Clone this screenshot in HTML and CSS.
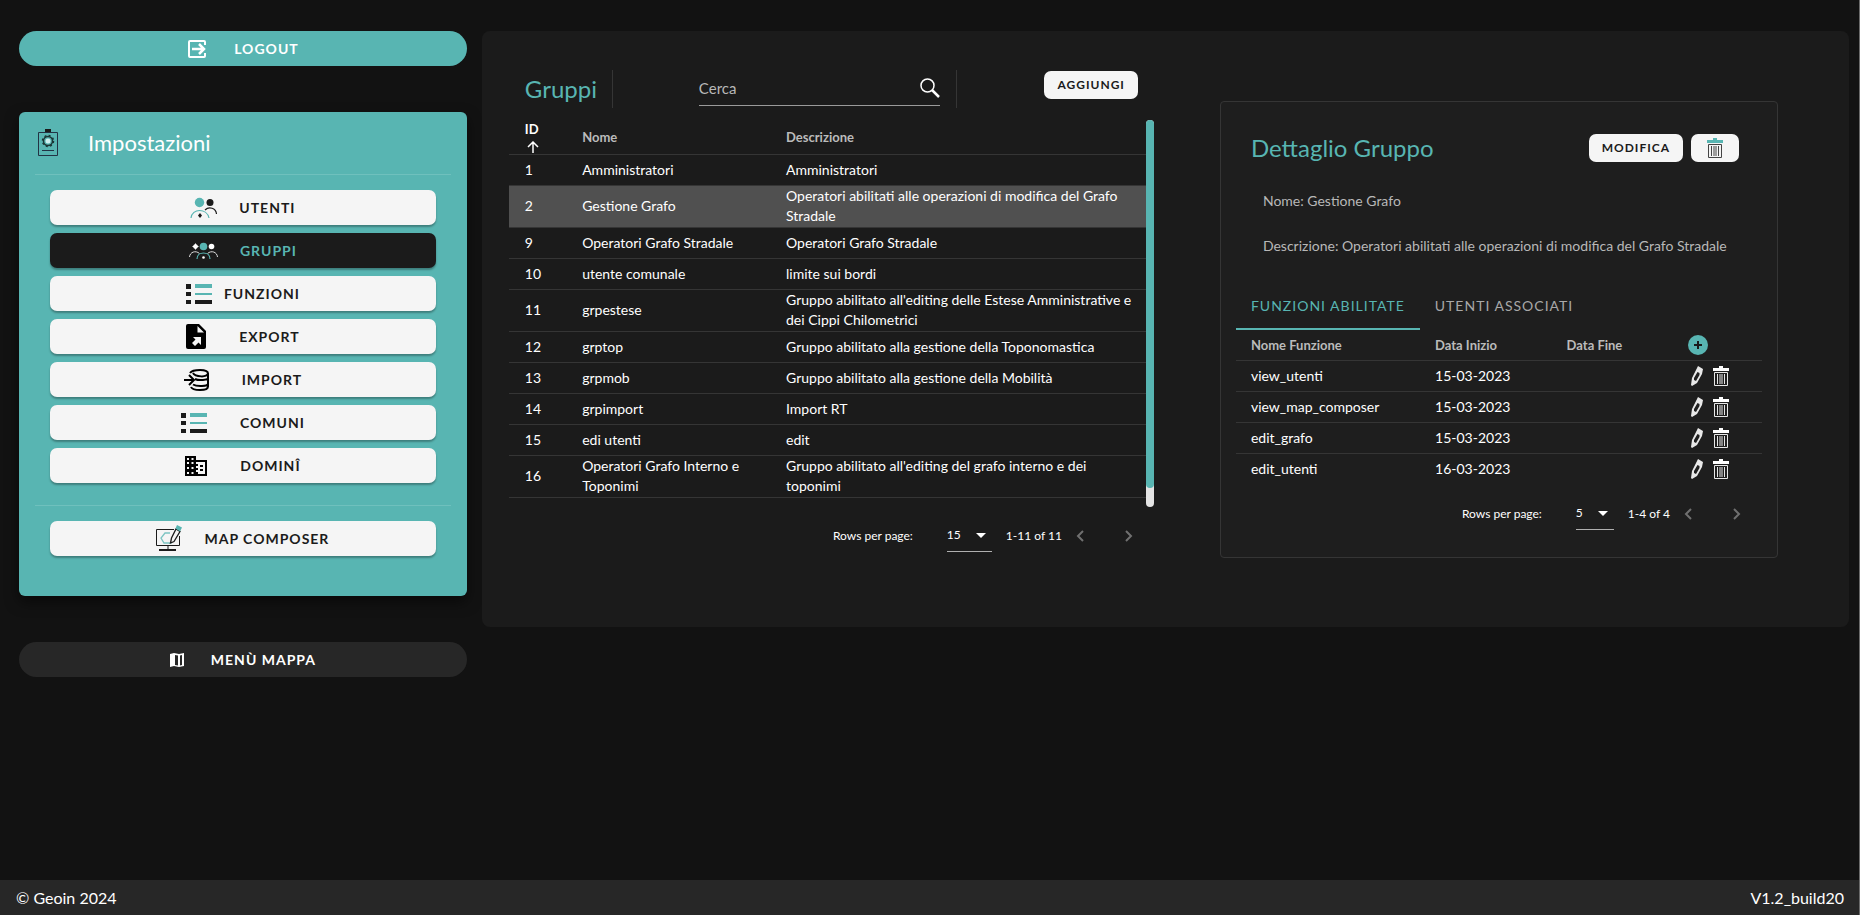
FILE: index.html
```html
<!DOCTYPE html>
<html lang="it">
<head>
    <meta charset="UTF-8">
    <meta name="viewport" content="width=device-width, initial-scale=1.0">
    <title>Impostazioni - Gruppi</title>
    <link rel="stylesheet" href="styles.css">
</head>
<body>
    <!-- Shared icons -->
    <svg class="sprite" aria-hidden="true">
        <symbol id="list" viewBox="0 0 26 22">
            <path fill="#1b1b1b" d="M0 1h5v5H0zM0 9h5v4H0zM0 17h5v4H0zM9 17h17v4H9z"/>
            <path fill="#58b5b2" d="M9 1h17v4H9zM9 10h17v2H9z"/>
        </symbol>
        <symbol id="trash" viewBox="0 0 16 20">
            <path class="lid" d="M6 0h4v2h6v3H0V2h6z"/>
            <path fill="none" stroke="currentColor" d="M1.5 6.500h13v13h-13z"/>
            <path fill="none" stroke="currentColor" d="M4.500 8v10M7 8v10M9 8v10M11.500 8v10"/>
        </symbol>
        <symbol id="pencil" viewBox="0 0 14 20">
            <path fill="currentColor" fill-rule="evenodd" d="M8 0l5 3-1 5-5 9-5 3-1-1 1-7zM7.500 6l-3.500 6v2l2 1 3.500-6V7z"/>
        </symbol>
        <symbol id="prev" viewBox="0 0 8 12">
            <path fill="none" stroke="currentColor" stroke-width="2" d="M7 1L2 6l5 5"/>
        </symbol>
        <symbol id="next" viewBox="0 0 8 12">
            <path fill="none" stroke="currentColor" stroke-width="2" d="M1 1l5 5-5 5"/>
        </symbol>
    </svg>

    <div class="layout">
        <aside class="sidebar">
            <button class="pill pill-logout">
                <svg width="20" height="20" viewBox="0 0 20 20"><path fill="none" stroke="currentColor" stroke-width="2" d="M18 6V3a1 1 0 0 0-1-1H3a1 1 0 0 0-1 1v14a1 1 0 0 0 1 1h14a1 1 0 0 0 1-1v-3"/><path fill="none" stroke="currentColor" stroke-width="2.500" d="M5 10h12M12 5l5 5-5 5"/></svg>
                Logout
            </button>

            <nav class="menu">
                <h2 class="menu-title">
                    <svg width="22" height="28" viewBox="0 0 22 28">
                        <path fill="#1b1b1b" d="M8 0h6v3H8z"/>
                        <path fill="none" stroke="#234" d="M1.500 3.500h19v23h-19zM5 21.500h12"/>
                        <circle cx="11" cy="12" r="4.500" fill="none" stroke="#1b3535" stroke-width="1.500"/>
                        <circle cx="11" cy="12" r="5.500" fill="none" stroke="#1b3535" stroke-width="1.500" stroke-dasharray="2 2.320"/>
                        <circle cx="11" cy="12" r="2.500" fill="#cfeeee"/>
                    </svg>
                    Impostazioni
                </h2>
                <div class="menu-list">
                    <button class="item gap-m">
                        <svg width="27" height="22" viewBox="0 0 27 22">
                            <circle cx="9.500" cy="5.500" r="4.700" fill="#58b5b2"/>
                            <circle cx="20" cy="5.500" r="3.500" fill="#1b1b1b"/>
                            <path fill="none" stroke="#58b5b2" stroke-width="1.200" d="M1 21c1-10 16-10 18 0"/>
                            <path fill="none" stroke="#1b1b1b" stroke-width="1.200" d="M15 13c4-4 11-2 11.500 4"/>
                            <path fill="#1b1b1b" d="M10 16l2 2.500-2 2.500-2-2.500z"/>
                        </svg>
                        Utenti
                    </button>
                    <button class="item item-active gap-m">
                        <svg width="29" height="18" viewBox="0 0 29 18">
                            <path fill="#fff" d="M6.500 1l1.200 2.300L10 4.500 7.700 5.700 6.500 8 5.300 5.700 3 4.500l2.300-1.200z"/>
                            <circle cx="6.500" cy="4.500" r="2.200" fill="#fff"/>
                            <circle cx="14.500" cy="4.500" r="3.800" fill="#58b5b2"/>
                            <circle cx="22.500" cy="4.500" r="2.800" fill="#fff"/>
                            <path fill="none" stroke="#ddd" d="M.5 15c.5-5 6-7 10-3.500M18.500 11.500c4-3.500 9.500-1.500 10 3.500"/>
                            <path fill="none" stroke="#58b5b2" stroke-width="1.200" d="M8 17c0-8 13-8 13 0"/>
                            <circle cx="14.500" cy="15.500" r="1.300" fill="#fff"/>
                        </svg>
                        Gruppi
                    </button>
                    <button class="item gap-s"><svg width="26" height="22"><use href="#list"/></svg>Funzioni</button>
                    <button class="item gap-l">
                        <svg width="20" height="25" viewBox="0 0 20 25">
                            <path d="M2 0h11l7 7v16a2 2 0 0 1-2 2H2a2 2 0 0 1-2-2V2a2 2 0 0 1 2-2z"/>
                            <path fill="#f5f5f5" d="M11.500 2v6.500H18zM7 13h8v8l-2.500-2.500L9 22l-3-3 3.500-3.500z"/>
                        </svg>
                        Export
                    </button>
                    <button class="item gap-l">
                        <svg width="25" height="22" viewBox="0 0 25 22">
                            <g fill="none" stroke="#000" stroke-width="2">
                                <path d="M6 4C8 1 13 1 16 1c5 0 8 1.500 8 3.500v13c0 2-3 3.500-8 3.500-4 0-8-.5-9-3M9 4c2 4 15 5 15 0M11 10c4 2 13 1 13-1M9 15.500c4 2.500 15 2 15-1"/>
                                <path d="M0 11h9M5 6l5 5-5 5"/>
                            </g>
                        </svg>
                        Import
                    </button>
                    <button class="item gap-l"><svg width="26" height="22"><use href="#list"/></svg>Comuni</button>
                    <button class="item gap-l">
                        <svg width="22" height="20" viewBox="0 0 22 20">
                            <path fill-rule="evenodd" d="M0 0h11v4h11v16H0zM2 2v2h2V2zM6.500 2v2h2V2zM2 6v2h2V6zM6.500 6v2h2V6zM2 11v2h2v-2zM6.500 11v2h2v-2zM2 16v2h2v-2zM6.500 16v2h2v-2zM11 6v2h2v2h-2v2h2v2h-2v2h2v2h7V6z"/>
                            <path d="M15 9h3v2h-3zM15 13h3v2h-3z"/>
                        </svg>
                        Dominî
                    </button>
                </div>
                <div class="menu-list">
                    <button class="item gap-m">
                        <svg width="26" height="27" viewBox="0 0 26 27">
                            <path fill="none" stroke="#1b1b1b" d="M18 4.500H.5v16h23V11M12 21v4"/>
                            <path fill="#1b1b1b" d="M3 24h17v2H3z"/>
                            <path fill="none" stroke="#7cc4c2" stroke-width="1.300" d="M14 8H9l-4 5 3 5h7l2-4"/>
                            <path fill="#f5f5f5" stroke="#1b1b1b" stroke-width="1.300" d="M20 4l4 2.500-6 10L14.500 18l1-5z"/>
                            <path fill="#58b5b2" d="M21 0l5 2.500-2 4-4.500-3z"/>
                        </svg>
                        Map Composer
                    </button>
                </div>
            </nav>

            <button class="pill pill-map">
                <svg width="14" height="14" viewBox="0 0 14 14"><path fill="currentColor" fill-rule="evenodd" d="M0 1l4-1 5 1 5-1v13l-5 1-5-1-4 1zM5 2v10l3 .6V2.600zM10 2.500v10l2-.5V2z"/></svg>
                Menù Mappa
            </button>
        </aside>

        <main class="panel">
            <section class="groups">
                <header class="groups-header">
                    <h1 class="title">Gruppi</h1>
                    <div class="search">
                        <label class="search-field">
                            <input type="text" placeholder="Cerca" aria-label="Cerca">
                            <svg width="20" height="20" viewBox="0 0 20 20"><circle cx="7.500" cy="7.500" r="6.500" fill="none" stroke="#fff" stroke-width="1.500"/><path stroke="#fff" stroke-width="2.500" d="M12 12l7 7"/></svg>
                        </label>
                    </div>
                    <button class="btn">Aggiungi</button>
                </header>

                <div class="table-frame">
                    <table class="groups-table">
                        <thead>
                            <tr>
                                <th class="col-id sorted">ID
                                    <svg width="12" height="12" viewBox="0 0 12 12"><path fill="none" stroke="currentColor" stroke-width="1.500" d="M6 12V1M1 6l5-5 5 5"/></svg>
                                </th>
                                <th class="col-name">Nome</th>
                                <th>Descrizione</th>
                            </tr>
                        </thead>
                        <tbody>
                            <tr><td>1</td><td>Amministratori</td><td>Amministratori</td></tr>
                            <tr class="selected"><td>2</td><td>Gestione Grafo</td><td>Operatori abilitati alle operazioni di modifica del Grafo Stradale</td></tr>
                            <tr><td>9</td><td>Operatori Grafo Stradale</td><td>Operatori Grafo Stradale</td></tr>
                            <tr><td>10</td><td>utente comunale</td><td>limite sui bordi</td></tr>
                            <tr><td>11</td><td>grpestese</td><td>Gruppo abilitato all'editing delle Estese Amministrative e dei Cippi Chilometrici</td></tr>
                            <tr><td>12</td><td>grptop</td><td>Gruppo abilitato alla gestione della Toponomastica</td></tr>
                            <tr><td>13</td><td>grpmob</td><td>Gruppo abilitato alla gestione della Mobilità</td></tr>
                            <tr><td>14</td><td>grpimport</td><td>Import RT</td></tr>
                            <tr><td>15</td><td>edi utenti</td><td>edit</td></tr>
                            <tr><td>16</td><td>Operatori Grafo Interno e Toponimi</td><td>Gruppo abilitato all'editing del grafo interno e dei toponimi</td></tr>
                        </tbody>
                    </table>
                    <div class="scrollbar"><div class="scrollbar-thumb"></div></div>
                </div>

                <div class="pagination">
                    <label for="groupRows">Rows per page:</label>
                    <span class="rows"><select id="groupRows"><option>15</option></select></span>
                    <span>1-11 of 11</span>
                    <button class="page-btn" aria-label="Pagina precedente"><svg width="8" height="12"><use href="#prev"/></svg></button>
                    <button class="page-btn" aria-label="Pagina successiva"><svg width="8" height="12"><use href="#next"/></svg></button>
                </div>
            </section>

            <section class="detail">
                <header class="detail-header">
                    <h2 class="title">Dettaglio Gruppo</h2>
                    <button class="btn">Modifica</button>
                    <button class="btn btn-trash" aria-label="Elimina"><svg width="16" height="20"><use href="#trash"/></svg></button>
                </header>
                <p class="detail-text">Nome: Gestione Grafo</p>
                <p class="detail-text">Descrizione: Operatori abilitati alle operazioni di modifica del Grafo Stradale</p>

                <div class="tabs">
                    <button class="tab tab-active">Funzioni Abilitate</button>
                    <button class="tab">Utenti Associati</button>
                </div>

                <table class="functions-table">
                    <thead>
                        <tr>
                            <th class="col-function">Nome Funzione</th>
                            <th class="col-start">Data Inizio</th>
                            <th class="col-end">Data Fine</th>
                            <th><button class="icon-btn" aria-label="Aggiungi funzione"><svg width="20" height="20" viewBox="0 0 20 20"><circle cx="10" cy="10" r="10" fill="#58b5b2"/><path stroke="#1b1b1b" stroke-width="2" d="M10 6v8M6 10h8"/></svg></button></th>
                        </tr>
                    </thead>
                    <tbody>
                        <tr><td>view_utenti</td><td>15-03-2023</td><td></td><td><div class="actions"><button class="icon-btn" aria-label="Modifica"><svg width="14" height="20"><use href="#pencil"/></svg></button><button class="icon-btn" aria-label="Elimina"><svg width="16" height="20"><use href="#trash"/></svg></button></div></td></tr>
                        <tr><td>view_map_composer</td><td>15-03-2023</td><td></td><td><div class="actions"><button class="icon-btn" aria-label="Modifica"><svg width="14" height="20"><use href="#pencil"/></svg></button><button class="icon-btn" aria-label="Elimina"><svg width="16" height="20"><use href="#trash"/></svg></button></div></td></tr>
                        <tr><td>edit_grafo</td><td>15-03-2023</td><td></td><td><div class="actions"><button class="icon-btn" aria-label="Modifica"><svg width="14" height="20"><use href="#pencil"/></svg></button><button class="icon-btn" aria-label="Elimina"><svg width="16" height="20"><use href="#trash"/></svg></button></div></td></tr>
                        <tr><td>edit_utenti</td><td>16-03-2023</td><td></td><td><div class="actions"><button class="icon-btn" aria-label="Modifica"><svg width="14" height="20"><use href="#pencil"/></svg></button><button class="icon-btn" aria-label="Elimina"><svg width="16" height="20"><use href="#trash"/></svg></button></div></td></tr>
                    </tbody>
                </table>

                <div class="pagination">
                    <label for="functionRows">Rows per page:</label>
                    <span class="rows"><select id="functionRows"><option>5</option></select></span>
                    <span>1-4 of 4</span>
                    <button class="page-btn" aria-label="Pagina precedente"><svg width="8" height="12"><use href="#prev"/></svg></button>
                    <button class="page-btn" aria-label="Pagina successiva"><svg width="8" height="12"><use href="#next"/></svg></button>
                </div>
            </section>
        </main>
    </div>

    <footer class="footer">
        <span>© Geoin 2024</span>
        <span>V1.2_build20</span>
    </footer>
</body>
</html>
```
FILE: styles.css
```css
:root {
    --teal: #58b5b2;
    --background: #121212;
    --panel: #1b1b1b;
    --card: #1e1e1e;
    --light: #f5f5f5;
    --line: #353535;
}

* {
    margin: 0;
    padding: 0;
    box-sizing: border-box;
}

body {
    font-family: Lato, "Open Sans", sans-serif;
    font-size: 14px;
    line-height: 20px;
    color: white;
    background: var(--background);
    border-right: 1px solid #6a6a6a;
    min-height: 100vh;
    display: flex;
    flex-direction: column;
}

button, input, select {
    font: inherit;
    color: inherit;
    background: none;
    border: none;
}

button {
    cursor: pointer;
}

svg {
    display: block;
    flex-shrink: 0;
}

.sprite {
    position: absolute;
    width: 0;
    height: 0;
}

.layout {
    flex: 1;
    display: grid;
    grid-template-columns: 19fr 58fr;
    gap: 15px;
    align-items: start;
    padding: 31px 10px 31px 19px;
}

/* Sidebar */
.sidebar {
    display: flex;
    flex-direction: column;
    gap: 46px;
}

.pill, .item {
    display: flex;
    align-items: center;
    justify-content: center;
    width: 100%;
    height: 35px;
    font-size: 14px;
    font-weight: 700;
    letter-spacing: 1px;
    text-transform: uppercase;
}

.pill {
    gap: 27px;
    border-radius: 18px;
}

.pill-logout {
    background: var(--teal);
}

.pill-map {
    background: #272727;
}

.menu {
    padding: 0 16px 39px;
    background: var(--teal);
    border-radius: 6px;
    box-shadow: 0 6px 14px rgba(0, 0, 0, 0.5);
}

.menu-title {
    display: flex;
    align-items: center;
    gap: 29px;
    height: 62px;
    padding-left: 2px;
    font-size: 22px;
    font-weight: 400;
}

.menu-list {
    display: flex;
    flex-direction: column;
    gap: 8px;
    padding: 15px 15px 22px;
    border-top: 1px solid #6fc0bd;
}

.menu-list:last-child {
    padding-bottom: 1px;
}

.item {
    color: #1b1b1b;
    background: var(--light);
    border-radius: 7px;
    box-shadow: 0 2px 2px rgba(0, 0, 0, 0.3);
}

.item-active {
    color: var(--teal);
    background: #1b1b1b;
}

.gap-s {
    gap: 12px;
}

.gap-m {
    gap: 22px;
}

.gap-l {
    gap: 33px;
}

/* Main panel */
.panel {
    display: grid;
    grid-template-columns: 645fr 558fr;
    gap: 66px;
    align-items: start;
    padding: 39px 71px 69px 27px;
    background: var(--panel);
    border-radius: 8px;
}

.title {
    font-size: 24px;
    font-weight: 400;
    line-height: 28px;
    color: var(--teal);
}

.btn {
    height: 28px;
    padding: 0 13px;
    font-size: 12px;
    font-weight: 700;
    letter-spacing: 1px;
    text-transform: uppercase;
    color: #1b1b1b;
    background: var(--light);
    border-radius: 7px;
}

.groups-header {
    display: grid;
    grid-template-columns: 103fr 345fr 197fr;
    height: 38px;
    margin-bottom: 12px;
}

.groups-header .title {
    padding: 5px 0 0 16px;
}

.groups-header .btn {
    justify-self: end;
    margin: 1px 16px 0 0;
}

.search {
    padding: 0 16px 2px 86px;
    border: solid var(--line);
    border-width: 0 1px;
}

.search-field {
    display: flex;
    align-items: center;
    height: 36px;
    border-bottom: 1px solid #9a9a9a;
}

.search-field input {
    flex: 1;
    min-width: 0;
    font-size: 15px;
    outline: none;
}

.search-field input::placeholder {
    color: #b8b8b8;
}

table {
    width: 100%;
    table-layout: fixed;
    border-spacing: 0;
}

th, td {
    height: 31px;
    padding: 0 12px 1px 16px;
    text-align: left;
    font-size: 14px;
    border-bottom: 1px solid var(--line);
}

th {
    font-size: 13px;
    color: #bbb;
}

.table-frame {
    display: flex;
    height: 387px;
}

.groups-table {
    align-self: start;
}

.groups-table th {
    height: 35px;
    padding-bottom: 0;
    line-height: 17px;
}

.groups-table .sorted {
    color: white;
}

.sorted svg {
    margin: 3px 2px 1px;
}

.col-id {
    width: 9%;
}

.col-name {
    width: 32%;
}

.selected td {
    background: #505050;
}

.scrollbar {
    flex: 0 0 8px;
    background: #e4e4e4;
    border-radius: 4px;
}

.scrollbar-thumb {
    height: 95%;
    background: var(--teal);
    border-radius: 4px;
}

.pagination {
    display: flex;
    align-items: center;
    justify-content: flex-end;
    gap: 14px;
    margin-top: 12px;
    padding-right: 15px;
    font-size: 12px;
}

.rows {
    position: relative;
    margin-left: 20px;
}

.rows select {
    appearance: none;
    height: 33px;
    padding-right: 31px;
    border-bottom: 1px solid #b0b0b0;
}

.rows::after {
    content: "";
    position: absolute;
    right: 6px;
    top: 14px;
    border: 5px solid transparent;
    border-top-color: white;
    border-bottom: none;
    pointer-events: none;
}

.page-btn {
    padding-right: 27px;
    color: #707070;
}

.page-btn:last-child {
    padding-right: 6px;
}

/* Group detail */
.detail {
    margin-top: 31px;
    padding: 32px 15px 27px;
    background: var(--card);
    border: 1px solid var(--line);
    border-radius: 4px;
}

.detail-header {
    display: flex;
    gap: 8px;
    padding: 0 23px 4px 15px;
}

.detail-header .title {
    flex: 1;
}

.btn-trash {
    padding: 0 16px;
    color: #444;
}

.btn-trash svg {
    fill: var(--teal);
}

.detail-text {
    margin-top: 25px;
    padding-left: 27px;
    color: #b8b8b8;
}

.tabs {
    display: flex;
    margin-top: 26px;
}

.tab {
    height: 48px;
    padding: 2px 15px 0;
    font-size: 14px;
    letter-spacing: 1px;
    text-transform: uppercase;
    color: #a8a8a8;
    border-bottom: 2px solid transparent;
}

.tab-active {
    color: var(--teal);
    border-color: var(--teal);
}

.functions-table th, .functions-table td {
    padding-left: 15px;
}

.functions-table tr:last-child td {
    border-bottom: none;
}

.functions-table thead th {
    border-bottom: 1px solid var(--line);
}

.col-function {
    width: 35%;
}

.col-start {
    width: 25%;
}

.col-end {
    width: 23%;
}

.icon-btn {
    display: block;
    color: #e8e8e8;
    fill: white;
}

.actions {
    display: flex;
    gap: 9px;
    padding-left: 2px;
}

/* Footer */
.footer {
    display: flex;
    align-items: center;
    justify-content: space-between;
    height: 35px;
    padding: 0 15px 0 16px;
    font-size: 16px;
    background: #272727;
}
```
